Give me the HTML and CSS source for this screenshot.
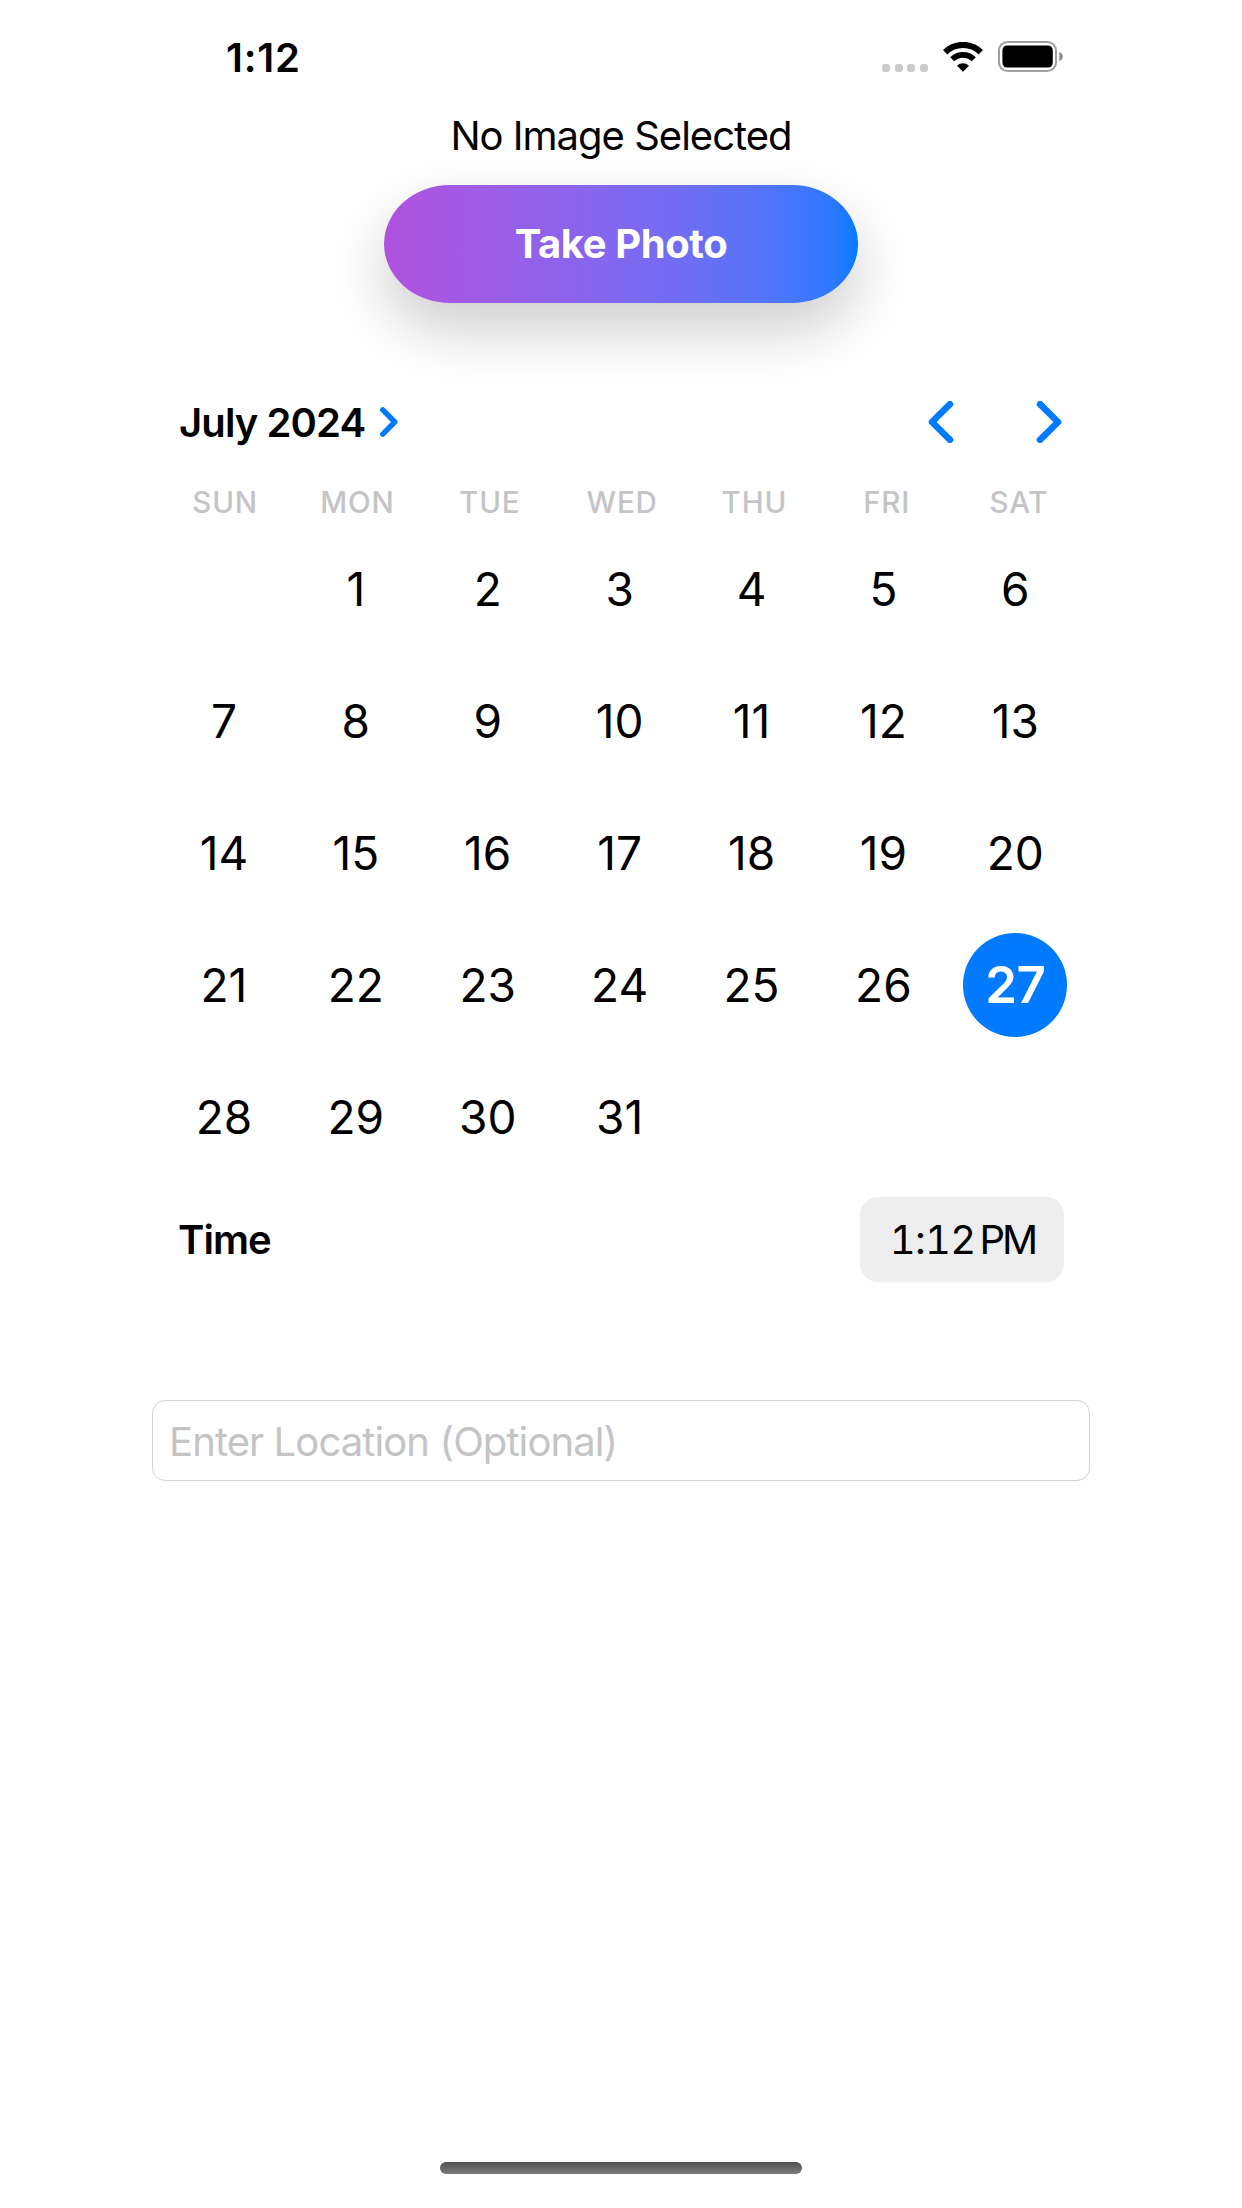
FILE: index.html
```html
<!DOCTYPE html>
<html lang="en">

<head>
    <meta charset="UTF-8">
    <meta name="viewport" content="width=device-width, initial-scale=1.0">
    <title>Take Photo</title>
    <link rel="stylesheet" href="styles.css">
</head>

<body>
    <div class="screen">
        <div class="status-bar">
            <span class="status-time">1:12</span>
            <div class="status-icons">
                <div class="dots">
                    <i></i><i></i><i></i><i></i>
                </div>
                <svg class="wifi" width="40" height="30" viewBox="0 0 40 30">
                    <path d="M2.2 10.3 A25.2 25.2 0 0 1 37.8 10.3" fill="none" stroke="#000" stroke-width="6.2" />
                    <path d="M9.2 17.3 A15.3 15.3 0 0 1 30.8 17.3" fill="none" stroke="#000" stroke-width="5.6" />
                    <path d="M20 29.8 L14 23.8 A8.6 8.6 0 0 1 26 23.8 Z" fill="#000" />
                </svg>
                <svg class="battery" width="66" height="31" viewBox="0 0 66 31">
                    <rect x="1" y="1" width="57" height="29" rx="8.5" fill="none" stroke="#a0a0a0" stroke-width="2" />
                    <rect x="4.4" y="4.4" width="50.4" height="22.2" rx="5" fill="#000" />
                    <path d="M61.3 11 Q64.8 12.5 64.8 15.5 T61.3 20 Z" fill="#8c8c8c" />
                </svg>
            </div>
        </div>

        <p class="image-label">No Image Selected</p>
        <button class="photo-button">Take Photo</button>

        <div class="calendar">
            <div class="calendar-header">
                <span class="month">July 2024</span>
                <svg class="month-arrow" width="18" height="30" viewBox="0 0 18 30">
                    <path d="M2.8 2.9 L14.8 15 L2.8 27.1" />
                </svg>
                <div class="month-nav">
                    <svg width="26" height="42" viewBox="0 0 26 42">
                        <path d="M22 3.2 L4 21 L22 38.8" />
                    </svg>
                    <svg width="26" height="42" viewBox="0 0 26 42">
                        <path d="M4 3.2 L22 21 L4 38.8" />
                    </svg>
                </div>
            </div>
            <div class="weekdays">
                <span>SUN</span><span>MON</span><span>TUE</span><span>WED</span><span>THU</span><span>FRI</span><span>SAT</span>
            </div>
            <div class="days">
                <span></span><span>1</span><span>2</span><span>3</span><span>4</span><span>5</span><span>6</span>
                <span>7</span><span>8</span><span>9</span><span>10</span><span>11</span><span>12</span><span>13</span>
                <span>14</span><span>15</span><span>16</span><span>17</span><span>18</span><span>19</span><span>20</span>
                <span>21</span><span>22</span><span>23</span><span>24</span><span>25</span><span>26</span><span class="selected">27</span>
                <span>28</span><span>29</span><span>30</span><span>31</span>
            </div>
        </div>

        <div class="time-row">
            <span class="time-label">Time</span>
            <button class="time-button"><span class="clock">1:12</span><span class="period">PM</span></button>
        </div>

        <input class="location" type="text" placeholder="Enter Location (Optional)">

        <div class="home-indicator"></div>
    </div>
</body>

</html>
```
FILE: styles.css
```css
* {
    box-sizing: border-box;
}

body {
    margin: 0;
    background: #fff;
    color: #000;
    font-family: Inter, "Liberation Sans", sans-serif;
    font-size: 40px;
}

button,
input {
    font-family: inherit;
    font-size: inherit;
}

.screen {
    width: 938px;
    height: 2208px;
    margin: 0 auto;
    padding-bottom: 34px;
    display: flex;
    flex-direction: column;
    align-items: center;
}

.status-bar {
    width: 100%;
    height: 112px;
    padding: 34px 26px 0 74px;
    display: flex;
    justify-content: space-between;
    align-items: flex-start;
}

.status-time {
    font-weight: 600;
    line-height: 48px;
    letter-spacing: 0.8px;
}

.status-icons {
    display: flex;
    align-items: flex-end;
    height: 38px;
}

.dots {
    display: flex;
    gap: 4.7px;
    margin-right: 15px;
}

.dots i {
    width: 8px;
    height: 8px;
    border-radius: 3px;
    background: #cbcbcb;
}

.wifi {
    margin-right: 15px;
}

.image-label {
    margin: 0;
    line-height: 48px;
    letter-spacing: -1px;
}

.photo-button {
    width: 474px;
    height: 118px;
    margin-top: 25px;
    padding: 0 0 2px;
    flex-shrink: 0;
    border: none;
    border-radius: 66px / 59px;
    background: linear-gradient(to right in srgb-linear, #af52de, #007aff);
    box-shadow: 0 26px 60px rgba(0, 0, 0, 0.2);
    color: #fff;
    font-weight: 700;
    letter-spacing: -0.4px;
}

.calendar {
    width: 926px;
    margin-top: 95px;
}

.calendar-header {
    display: flex;
    align-items: center;
    height: 48px;
    padding: 0 22px 0 21px;
}

.calendar-header svg {
    fill: none;
    stroke: #007aff;
    stroke-width: 6.6;
    stroke-linecap: round;
    stroke-linejoin: round;
}

.calendar-header .month-arrow {
    margin-left: 15px;
    stroke-width: 5.4;
}

.month {
    font-weight: 600;
    letter-spacing: -0.9px;
}

.month-nav {
    display: flex;
    gap: 82px;
    margin-left: auto;
}

.weekdays {
    display: grid;
    grid-template-columns: repeat(7, 132.3px);
    margin-top: 38px;
    padding-left: 1px;
    color: #c4c4c6;
    font-size: 29.5px;
    font-weight: 550;
    line-height: 36px;
    letter-spacing: 0.8px;
    text-align: center;
}

.days {
    display: grid;
    grid-template-columns: repeat(7, 131.9px);
    grid-auto-rows: 131.9px;
    margin-top: 3px;
    font-size: 46px;
    place-items: center;
}

.selected {
    width: 104px;
    height: 104px;
    border-radius: 50%;
    background: #007aff;
    color: #fff;
    font-size: 51px;
    font-weight: 600;
    line-height: 104px;
    letter-spacing: -0.6px;
    text-align: center;
}

.time-row {
    width: 886px;
    height: 85px;
    margin-top: 15px;
    display: flex;
    justify-content: space-between;
    align-items: center;
}

.time-label {
    font-weight: 600;
    letter-spacing: -1px;
}

.time-button {
    width: 204px;
    height: 85px;
    padding: 0 0 0 1px;
    border: none;
    border-radius: 18px;
    background: #eee;
    color: #000;
}

.clock {
    font-variant-numeric: tabular-nums;
    letter-spacing: -0.7px;
}

.period {
    margin-left: 4px;
    letter-spacing: -3px;
}

.location {
    width: 938px;
    height: 81px;
    margin-top: 118px;
    padding: 2px 16px 0;
    border: 1px solid #d2d2d4;
    border-radius: 13px;
    background: #fff;
    letter-spacing: -0.9px;
}

.location::placeholder {
    color: #c4c4c6;
}

.home-indicator {
    width: 362px;
    height: 12px;
    margin-top: auto;
    border-radius: 6px;
    background: linear-gradient(#505050, #7c7c7c);
}
```
